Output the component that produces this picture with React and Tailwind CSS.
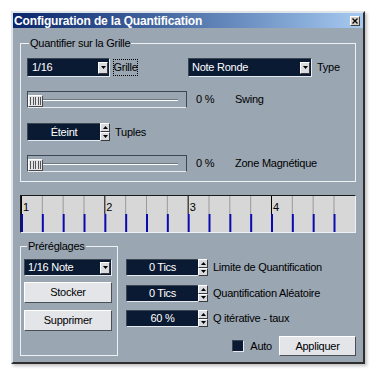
import React from "react";

function Tri({ up = false }) {
  return (
    <svg width="5" height="3" viewBox="0 0 5 3" className="block">
      <polygon points={up ? "0,3 5,3 2.5,0" : "0,0 5,0 2.5,3"} fill="#000" />
    </svg>
  );
}

function Dropdown({ className, text, textClass }) {
  return (
    <div
      className={`flex items-center bg-[#0b1a33] border border-t-[#3b4652] border-l-[#3b4652] border-r-[#e6eaee] border-b-[#e6eaee] ${className}`}
    >
      <span className={`flex-1 text-white text-[11px] leading-none whitespace-nowrap ${textClass}`}>{text}</span>
      <div className="mr-[1px] w-[10px] h-[12px] bg-[#d8dbe0] border border-t-white border-l-white border-r-[#3a3a3a] border-b-[#3a3a3a] flex items-center justify-center">
        <Tri />
      </div>
    </div>
  );
}

function Spin({ className, text }) {
  return (
    <div className={`flex ${className}`}>
      <div className="flex-1 flex items-center justify-center bg-[#0b1a33] border border-t-[#3b4652] border-l-[#3b4652] border-r-0 border-b-[#e6eaee] text-white text-[11px] leading-none">
        {text}
      </div>
      <div className="w-[10px] flex flex-col">
        <div className="flex-1 bg-[#d8dbe0] border border-t-white border-l-white border-r-[#3a3a3a] border-b-[#3a3a3a] flex items-center justify-center">
          <Tri up />
        </div>
        <div className="flex-1 bg-[#d8dbe0] border border-t-white border-l-white border-r-[#3a3a3a] border-b-[#3a3a3a] flex items-center justify-center">
          <Tri />
        </div>
      </div>
    </div>
  );
}

function Slider() {
  return (
    <div className="flex items-end w-[160px] h-[17px] border border-t-[#3e4853] border-l-[#3e4853] border-r-[#3e4853] border-b-[#e8ecf0]">
      <div className="w-[15px] h-[12px] bg-[#e2e4e8] border border-t-white border-l-white border-r-[#4a4a4a] border-b-[#4a4a4a] flex items-center justify-center gap-[1.5px]">
        <div className="w-[1px] h-[8px] bg-[#555]" />
        <div className="w-[1px] h-[8px] bg-[#555]" />
        <div className="w-[1px] h-[8px] bg-[#555]" />
        <div className="w-[1px] h-[8px] bg-[#555]" />
        <div className="w-[1px] h-[8px] bg-[#555]" />
      </div>
      <div className="flex-1 self-start mt-[7px] mr-[8px] h-[2px] border-t border-t-[#6b7682] bg-white" />
    </div>
  );
}

function Ruler() {
  const items = [];
  for (let i = 0; i < 16; i++) {
    const x = i * 20.833;
    const bar = i % 4 === 0;
    items.push(
      <g key={i}>
        <line x1={x + 0.5} y1={0} x2={x + 0.5} y2={18} stroke={bar ? "#000" : "#9a9a9a"} strokeWidth="1" />
        <rect x={x} y={18} width={2} height={18} fill="#0a0ab0" />
        {bar && (
          <text x={x + 2} y={15} fontSize="11" fontFamily="Liberation Sans, Arial, sans-serif" fill="#000">
            {i / 4 + 1}
          </text>
        )}
      </g>
    );
  }
  return (
    <div className="mt-[13px] h-[38px] bg-[#d7d7d7] border border-t-[#1a1a1a] border-l-[#1a1a1a] border-r-[#eef1f4] border-b-[#eef1f4]">
      <svg width="334" height="36" className="block">
        {items}
      </svg>
    </div>
  );
}

function Button({ className, children }) {
  return (
    <div
      className={`flex items-center justify-center bg-[#e3e5e9] border border-t-white border-l-white border-r-[#4a4f55] border-b-[#4a4f55] text-[11px] text-black ${className}`}
    >
      {children}
    </div>
  );
}

export default function App() {
  return (
    <div className="w-[376px] h-[377px] bg-white pt-[11px] pl-[11px] font-['Liberation_Sans',Arial,sans-serif] tracking-[-0.25px] text-black">
      <div className="w-[354px] h-[353px] bg-[#9aa6b2] border-2 border-t-[#dfe4ea] border-l-[#dfe4ea] border-r-[#2e2e2e] border-b-[#2e2e2e] shadow-[2px_2px_3px_rgba(0,0,0,0.25)]">
        {/* Title bar */}
        <div className="h-[15px] flex items-center bg-gradient-to-r from-[#0a246a] to-[#a6caf0] pl-[1px] pr-[3px]">
          <span className="flex-1 text-white font-bold text-[12px] leading-none tracking-[-0.15px] whitespace-nowrap">
            Configuration de la Quantification
          </span>
          <div className="w-[10px] h-[10px] bg-[#d4d0c8] border border-t-white border-l-white border-r-[#404040] border-b-[#404040] flex items-center justify-center">
            <svg width="6" height="6" viewBox="0 0 6 6" className="block">
              <path d="M0.5 0.5 L5.5 5.5 M5.5 0.5 L0.5 5.5" stroke="#000" strokeWidth="1.2" />
            </svg>
          </div>
        </div>

        <div className="px-[7px]">
          {/* Quantifier sur la Grille */}
          <fieldset className="mt-[8px] border border-[#eef1f4] pl-[6px] pr-[6px] pt-[8px] pb-[9px]">
            <legend className="ml-[2px] px-[1px] text-[11px] leading-[14px]">Quantifier sur la Grille</legend>
            <div className="flex items-center h-[19px]">
              <Dropdown className="w-[83px] h-[19px]" textClass="pl-[4px]" text="1/16" />
              <div className="ml-[3px] w-[25px] h-[17px] border border-dotted border-black flex items-center justify-center text-[11px]">
                Grille
              </div>
              <Dropdown className="ml-[50px] w-[124px] h-[19px]" textClass="pl-[3px]" text="Note Ronde" />
              <span className="ml-[5px] text-[11px]">Type</span>
            </div>
            <div className="mt-[14px] flex items-center h-[17px]">
              <Slider />
              <span className="ml-[9px] w-[39px] text-[11px]">0 %</span>
              <span className="text-[11px]">Swing</span>
            </div>
            <div className="mt-[15px] flex items-center h-[18px]">
              <Spin className="w-[83px] h-[18px]" text="Éteint" />
              <span className="ml-[5px] text-[11px]">Tuples</span>
            </div>
            <div className="mt-[14px] flex items-center h-[17px]">
              <Slider />
              <span className="ml-[9px] w-[39px] text-[11px]">0 %</span>
              <span className="text-[11px]">Zone Magnétique</span>
            </div>
          </fieldset>

          <Ruler />

          <div className="mt-[6px] flex">
            {/* Préréglages */}
            <fieldset className="w-[98px] border border-[#eef1f4] pl-[3px] pr-[5px] pt-[6px] pb-[9px]">
              <legend className="ml-[3px] px-[1px] text-[11px] leading-[14px]">Préréglages</legend>
              <Dropdown className="w-[88px] h-[17px]" textClass="pl-[3px]" text="1/16 Note" />
              <Button className="mt-[6px] h-[21px]">Stocker</Button>
              <Button className="mt-[7px] h-[21px]">Supprimer</Button>
            </fieldset>

            <div className="ml-[8px] flex-1 pt-[20px]">
              <div className="flex items-center h-[17px]">
                <Spin className="w-[82px] h-[17px]" text="0 Tics" />
                <span className="ml-[5px] text-[11px]">Limite de Quantification</span>
              </div>
              <div className="mt-[9px] flex items-center h-[17px]">
                <Spin className="w-[82px] h-[17px]" text="0 Tics" />
                <span className="ml-[5px] text-[11px]">Quantification Aléatoire</span>
              </div>
              <div className="mt-[8px] flex items-center h-[17px]">
                <Spin className="w-[82px] h-[17px]" text="60 %" />
                <span className="ml-[5px] text-[11px]">Q itérative - taux</span>
              </div>
              <div className="mt-[9px] flex items-center justify-end h-[20px]">
                <div className="w-[12px] h-[12px] bg-[#0b1a33] border border-t-[#3b4652] border-l-[#3b4652] border-r-[#e6eaee] border-b-[#e6eaee]" />
                <span className="ml-[6px] text-[11px]">Auto</span>
                <Button className="ml-[7px] w-[77px] h-[20px]">Appliquer</Button>
              </div>
            </div>
          </div>
        </div>
      </div>
    </div>
  );
}
